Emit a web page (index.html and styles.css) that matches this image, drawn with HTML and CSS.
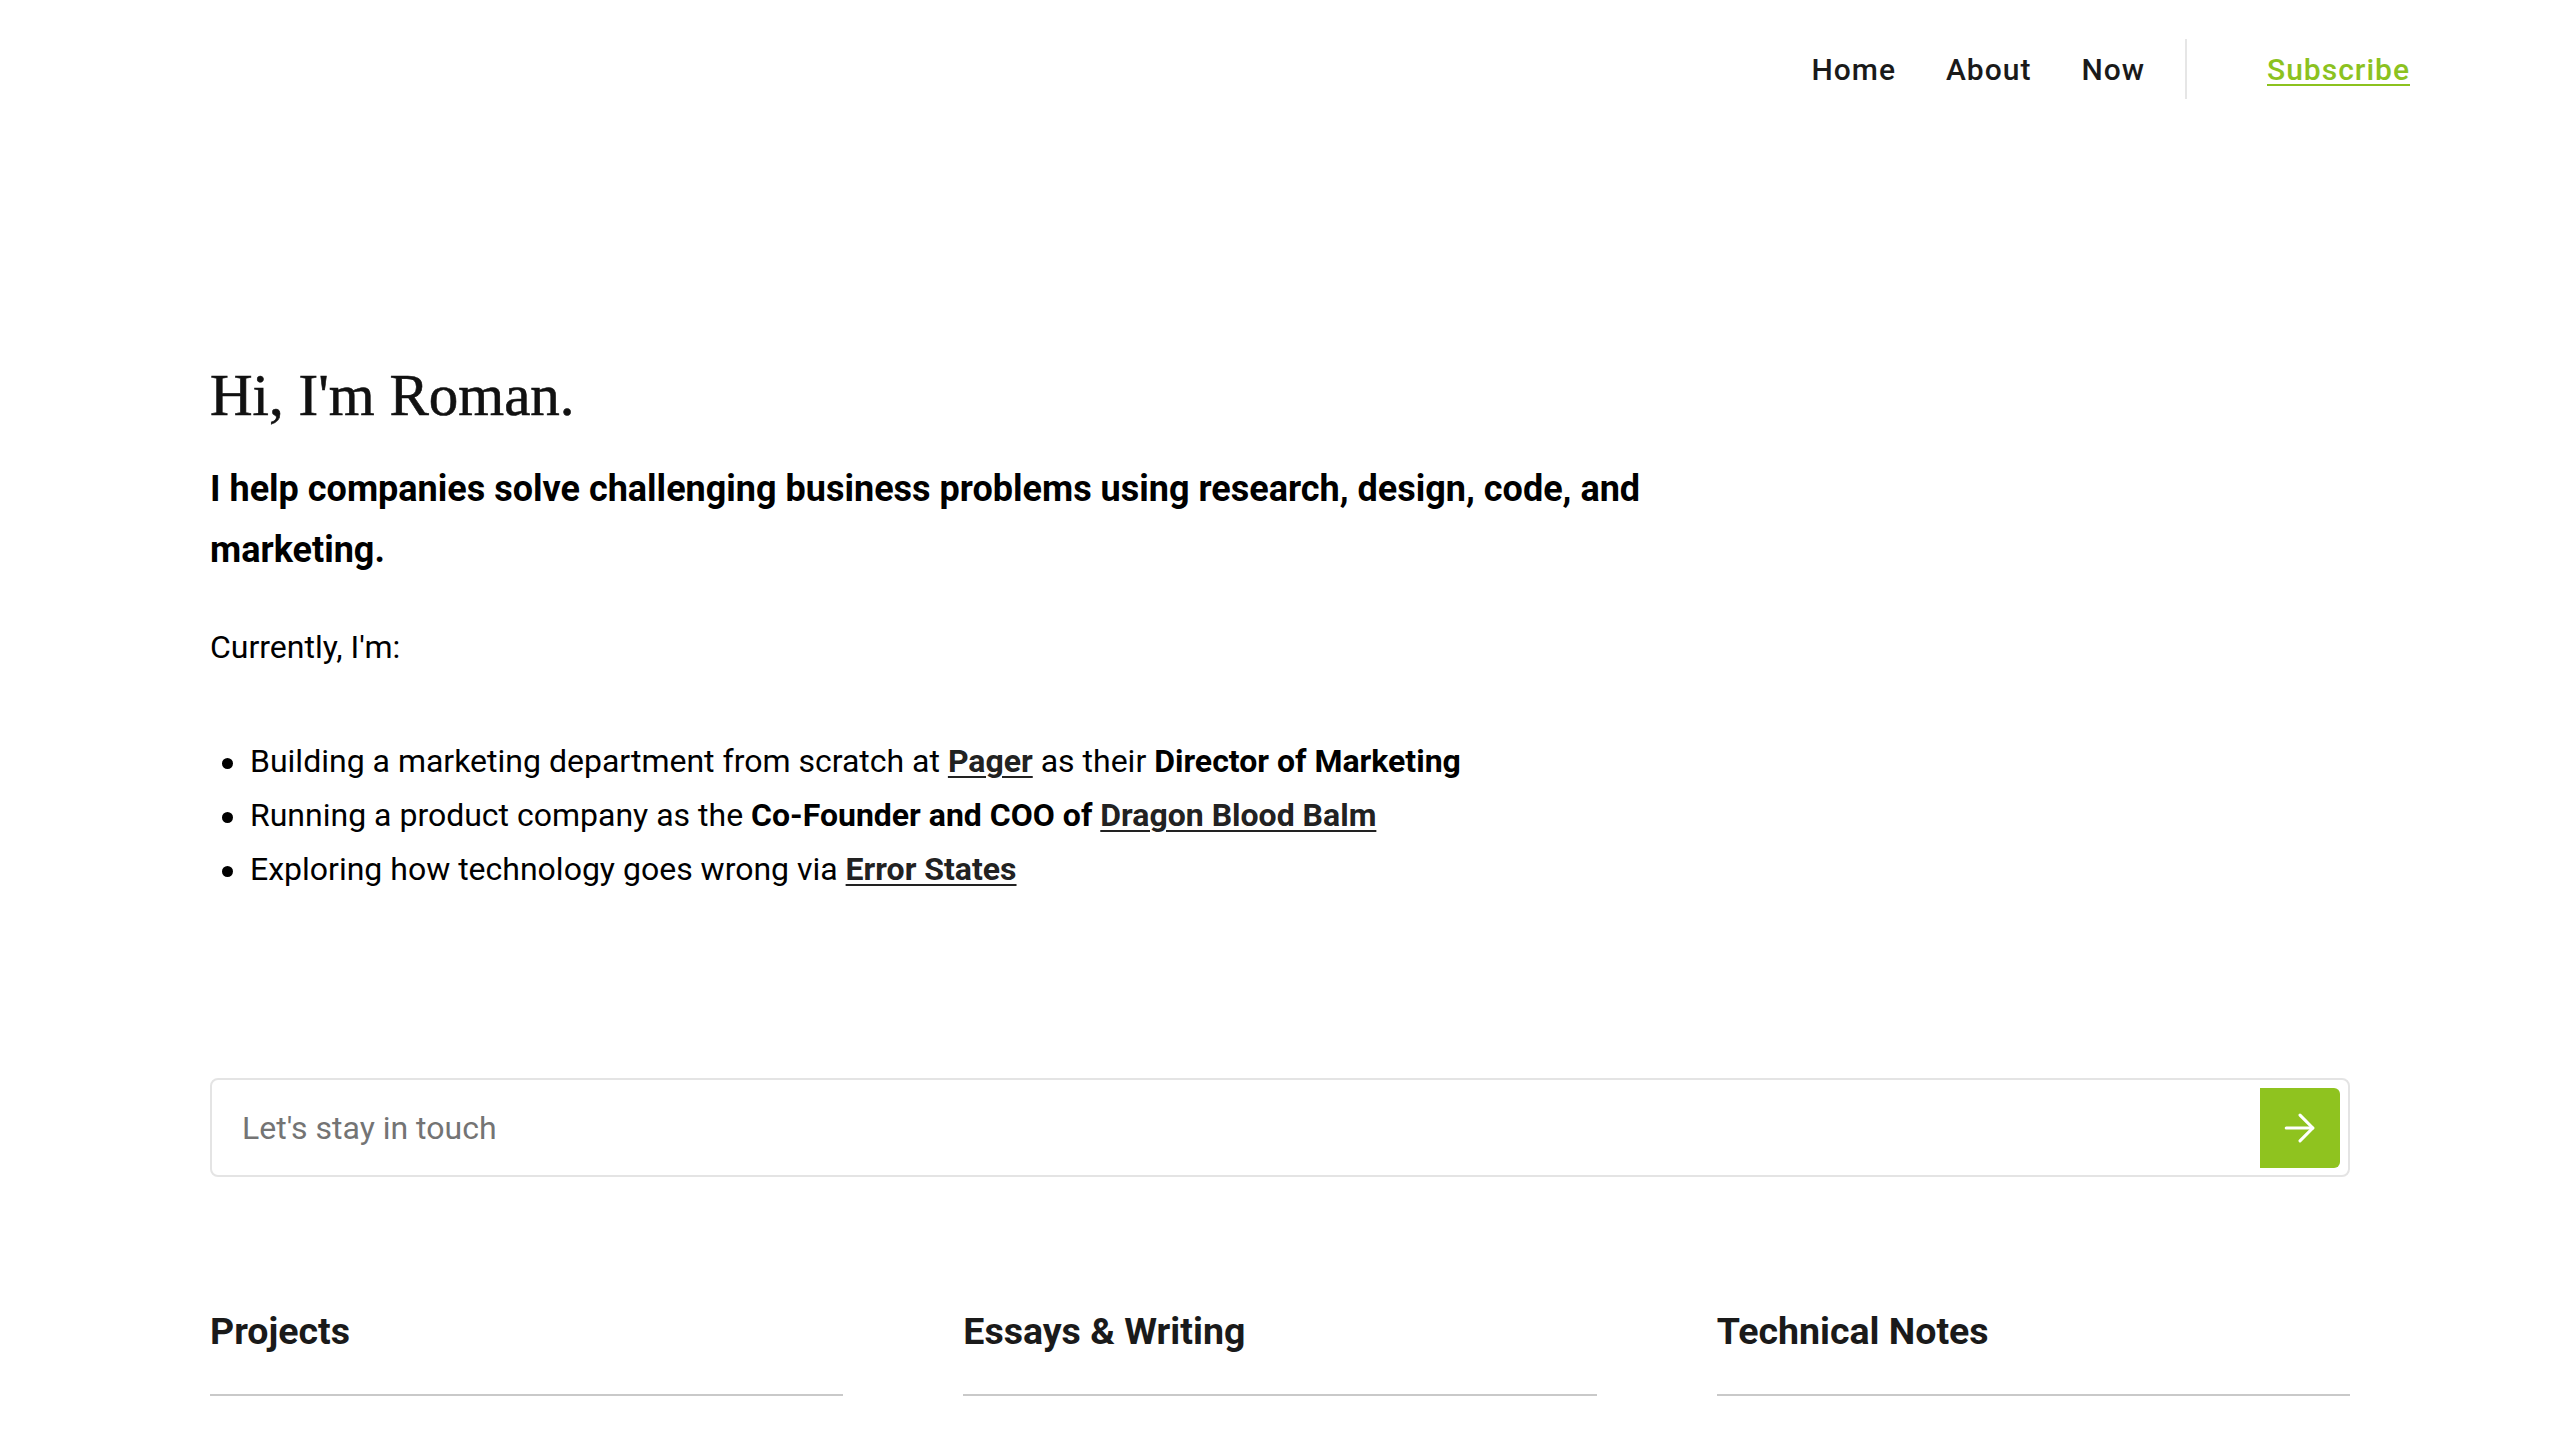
FILE: index.html
```html
<!DOCTYPE html>
<html lang="en">
<head>
<meta charset="utf-8">
<title>Roman</title>
<link rel="stylesheet" href="styles.css">
</head>
<body>
<header class="site-header">
  <nav class="nav">
    <a class="nav-link" href="#">Home</a>
    <a class="nav-link" href="#">About</a>
    <a class="nav-link nav-link-last" href="#">Now</a>
    <span class="nav-divider"></span>
    <a class="nav-subscribe" href="#">Subscribe</a>
  </nav>
</header>
<main class="container">
  <section class="hero">
    <h1 class="hero-title">Hi, I'm Roman.</h1>
    <p class="hero-lead">I help companies solve challenging business problems using research, design, code, and marketing.</p>
    <p class="hero-text">Currently, I'm:</p>
    <ul class="hero-list">
      <li>Building a marketing department from scratch at <a class="inline-link" href="#">Pager</a> as their <strong>Director of Marketing</strong></li>
      <li>Running a product company as the <strong>Co-Founder and COO of</strong> <a class="inline-link" href="#">Dragon Blood Balm</a></li>
      <li>Exploring how technology goes wrong via <a class="inline-link" href="#">Error States</a></li>
    </ul>
  </section>
  <form class="subscribe-form">
    <input class="subscribe-input" type="email" placeholder="Let's stay in touch">
    <button class="subscribe-button" type="button" aria-label="Subscribe">
      <svg width="44" height="44" viewBox="0 0 24 24" fill="none" stroke="#ffffff" stroke-width="1.7" stroke-linecap="round" stroke-linejoin="round"><line x1="4.5" y1="12" x2="19" y2="12"/><polyline points="12 5 19 12 12 19"/></svg>
    </button>
  </form>
  <section class="columns">
    <div class="column"><h2 class="column-title">Projects</h2></div>
    <div class="column"><h2 class="column-title">Essays &amp; Writing</h2></div>
    <div class="column"><h2 class="column-title">Technical Notes</h2></div>
  </section>
</main>
</body>
</html>
```
FILE: styles.css
```css
* { box-sizing: border-box; }
html, body { margin: 0; padding: 0; background: #ffffff; }
body {
  font-family: Roboto, "Noto Sans", "Liberation Sans", sans-serif;
  color: #111111;
}
.site-header {
  display: flex;
  justify-content: flex-end;
  padding: 39px 150px 0 0;
  height: 140px;
}
.nav {
  display: flex;
  align-items: center;
  height: 60px;
}
.nav-link {
  font-size: 30px;
  font-weight: 500;
  letter-spacing: 1px;
  color: #1a1a1a;
  text-decoration: none;
  margin-right: 50px;
}
.nav-link-last { margin-right: 40px; }
.nav-divider {
  width: 2px;
  height: 60px;
  background: #e6e6e6;
  margin-right: 80px;
}
.nav-subscribe {
  font-size: 30px;
  font-weight: 500;
  letter-spacing: 1px;
  color: #8cc21f;
  text-decoration: underline;
  text-decoration-thickness: 2px;
  text-underline-offset: 4px;
}
.container {
  margin-left: 210px;
  width: 2140px;
}
.hero { padding-top: 220px; }
.hero-title {
  font-family: "Liberation Serif", "DejaVu Serif", serif;
  font-weight: 400;
  font-size: 59px;
  line-height: 70px;
  margin: 0;
  color: #111111;
  -webkit-text-stroke: 0.6px #111111;
}
.hero-lead {
  font-size: 36px;
  font-weight: 700;
  line-height: 60.5px;
  margin: 29px 0 0;
  max-width: 1480px;
  color: #000000;
}
.hero-text {
  font-size: 32px;
  line-height: 54px;
  margin: 40px 0 0;
  color: #000000;
}
.hero-list {
  list-style: none;
  font-size: 32px;
  line-height: 54px;
  margin: 60px 0 0;
  padding-left: 40px;
  color: #000000;
}
.hero-list li::before {
  content: "";
  display: inline-block;
  width: 11px;
  height: 11px;
  border-radius: 50%;
  background: #000000;
  margin-left: -28px;
  margin-right: 17px;
  vertical-align: middle;
}
.hero-list strong { font-weight: 700; }
.inline-link {
  color: #222222;
  font-weight: 700;
  text-decoration: underline;
  text-decoration-thickness: 2px;
  text-underline-offset: 4px;
}
.subscribe-form {
  margin-top: 182px;
  display: flex;
  align-items: center;
  height: 99px;
  border: 2px solid #e4e4e4;
  border-radius: 8px;
  padding: 8px 8px 8px 0;
}
.subscribe-input {
  flex: 1;
  height: 100%;
  border: none;
  outline: none;
  background: transparent;
  font-family: Roboto, "Noto Sans", sans-serif;
  font-size: 32px;
  padding: 0 0 0 30px;
  color: #333333;
}
.subscribe-input::placeholder { color: #747474; }
.subscribe-button {
  width: 80px;
  height: 80px;
  border: none;
  background: #8fc31f;
  border-radius: 0 6px 6px 0;
  display: flex;
  align-items: center;
  justify-content: center;
  padding: 0;
}
.columns {
  display: grid;
  grid-template-columns: repeat(3, 1fr);
  column-gap: 120px;
  margin-top: 130px;
}
.column-title {
  font-size: 37.5px;
  font-weight: 700;
  line-height: 48px;
  margin: 0;
  padding-bottom: 39px;
  border-bottom: 2px solid #c9c9c9;
  color: #1a1a1a;
}
```
